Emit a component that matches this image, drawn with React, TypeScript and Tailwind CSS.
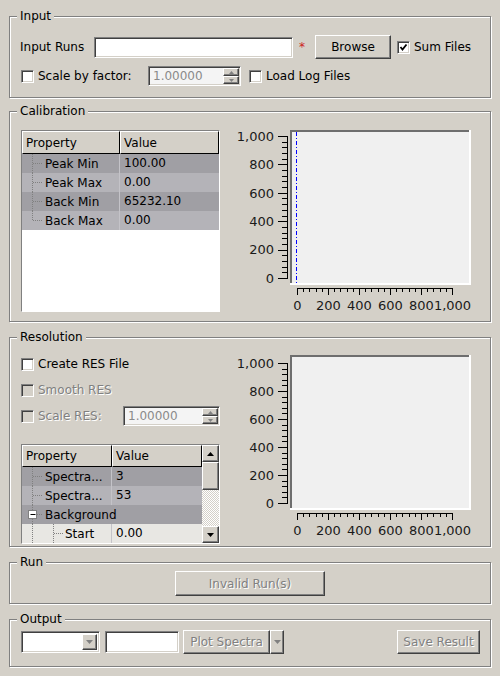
import React from 'react';

// Qt "Windows" style bevels
const sunken =
  'border border-t-[#808080] border-l-[#808080] border-b-white border-r-white shadow-[inset_1px_1px_0_#404040,inset_-1px_-1px_0_#d4d0c8]';
const raised =
  'border border-t-white border-l-white border-b-[#404040] border-r-[#404040] shadow-[inset_-1px_-1px_0_#808080]';
const greyText = 'text-[#808080] [text-shadow:1px_1px_0_#fff]';

const GroupBox: React.FC<{ title: string; className?: string; children: React.ReactNode }> = ({
  title,
  className = '',
  children,
}) => (
  <fieldset
    className={`ml-[9px] w-[482px] border border-[#808080] shadow-[1px_1px_0_#fff,inset_1px_1px_0_#fff] ${className}`}
  >
    <legend className="ml-[7px] px-[3px] leading-[14px] bg-[#d4d0c8]">{title}</legend>
    {children}
  </fieldset>
);

const CheckBox: React.FC<{ checked?: boolean; disabled?: boolean }> = ({ checked, disabled }) => (
  <span className={`block w-[13px] h-[13px] shrink-0 ${sunken} ${disabled ? 'bg-[#d4d0c8]' : 'bg-white'}`}>
    {checked && (
      <svg width="11" height="11" viewBox="0 0 11 11" className="block">
        <path d="M2.5 5 L4.5 7.5 L8.5 2.5" stroke="#000" strokeWidth="1.8" fill="none" />
      </svg>
    )}
  </span>
);

const Arrow: React.FC<{ up?: boolean; color?: string; size?: number }> = ({ up, color = '#000', size = 7 }) => {
  const h = Math.ceil(size / 2);
  return (
    <svg width={size} height={h} viewBox={`0 0 ${size} ${h}`} className="block">
      <path d={up ? `M0 ${h} L${size / 2} 0 L${size} ${h} Z` : `M0 0 L${size} 0 L${size / 2} ${h} Z`} fill={color} />
    </svg>
  );
};

const SpinBox: React.FC<{ className: string }> = ({ className }) => (
  <div className={`flex h-[20px] bg-[#f4f4f4] ${sunken} ${className}`}>
    <span className="flex-1 pl-[4px] leading-[18px] text-[#8a8a8a]">1.00000</span>
    <div className="flex flex-col w-[16px] my-[1px] mr-[1px]">
      <div className={`flex-1 flex items-center justify-center bg-[#d4d0c8] ${raised}`}>
        <Arrow up color="#808080" size={5} />
      </div>
      <div className={`flex-1 flex items-center justify-center bg-[#d4d0c8] ${raised}`}>
        <Arrow color="#808080" size={5} />
      </div>
    </div>
  </div>
);

const Plot: React.FC<{ yTop: number; marker?: boolean; className?: string }> = ({ yTop, marker, className = '' }) => {
  const yBot = 148;
  const yStep = (yBot - yTop) / 5;
  const x0 = 75;
  const xStep = 31;
  const labels = ['0', '200', '400', '600', '800', '1,000'];
  const yTicks: React.ReactNode[] = [];
  const xTicks: React.ReactNode[] = [];
  for (let i = 0; i <= 25; i++) {
    const major = i % 5 === 0;
    const y = Math.round(yBot - (i * yStep) / 5) + 0.5;
    yTicks.push(<line key={`y${i}`} x1={major ? 56 : 60} x2={66} y1={y} y2={y} stroke="#000" />);
    const x = Math.round(x0 + (i * xStep) / 5) + 0.5;
    xTicks.push(<line key={`x${i}`} x1={x} x2={x} y1={158} y2={major ? 165 : 162} stroke="#000" />);
  }
  return (
    <svg width="258" height="185" className={`block shrink-0 ${className}`} fontFamily="DejaVu Sans" fontSize="13">
      <rect x="68" y="0" width="181" height="155" fill="#fff" />
      <rect x="68" y="0" width="179" height="153" fill="#6e6e6e" />
      <rect x="70" y="2" width="177" height="151" fill="#f0f0f0" />
      {marker && <line x1="74.5" x2="74.5" y1="2" y2="153" stroke="#0000ff" strokeDasharray="4 2 1 2" />}
      <line x1="65.5" x2="65.5" y1={Math.round(yTop)} y2={yBot + 1} stroke="#000" />
      {yTicks}
      <line x1={x0} x2={x0 + 5 * xStep + 1} y1="158.5" y2="158.5" stroke="#000" />
      {xTicks}
      {labels.map((l, i) => (
        <text key={`yl${l}`} x="52" y={yBot - i * yStep + 4.7} textAnchor="end" fill="#1a1a1a">
          {l}
        </text>
      ))}
      {labels.map((l, i) => (
        <text key={`xl${l}`} x={x0 + 0.5 + i * xStep} y="180" textAnchor="middle" fill="#1a1a1a">
          {l}
        </text>
      ))}
    </svg>
  );
};

// dotted tree connectors
const Tree: React.FC<{ w: number; lines: number[]; branch: number; last?: boolean; box?: boolean }> = ({
  w,
  lines,
  branch,
  last,
  box,
}) => (
  <svg width={w} height="19" className="block shrink-0">
    {lines.map((x) =>
      box && x === branch ? (
        <g key={x}>
          <line x1={x + 0.5} x2={x + 0.5} y1="0" y2="5" stroke="#808080" strokeDasharray="1 1" />
          <line x1={x + 0.5} x2={x + 0.5} y1="14" y2="19" stroke="#808080" strokeDasharray="1 1" />
        </g>
      ) : (
        <line
          key={x}
          x1={x + 0.5}
          x2={x + 0.5}
          y1="0"
          y2={x === branch && last ? 10 : 19}
          stroke="#808080"
          strokeDasharray="1 1"
        />
      ),
    )}
    <line x1={branch + (box ? 5 : 1)} x2={branch + 11} y1="9.5" y2="9.5" stroke="#808080" strokeDasharray="1 1" />
    {box && (
      <>
        <rect x={branch - 3.5} y="5.5" width="8" height="8" fill="#fff" stroke="#808080" />
        <line x1={branch - 1.5} x2={branch + 3.5} y1="9.5" y2="9.5" stroke="#000" />
      </>
    )}
  </svg>
);

const Header: React.FC<{ nameW: string; valueW: string; h: string }> = ({ nameW, valueW, h }) => (
  <div className={`flex ${h} shrink-0`}>
    <div className={`${nameW} flex items-center pl-[3px] bg-[#d4d0c8] border border-t-white border-l-white border-b-black border-r-black`}>
      Property
    </div>
    <div className={`${valueW} flex items-center pl-[3px] bg-[#d4d0c8] border border-t-white border-l-white border-b-black border-r-black`}>
      Value
    </div>
  </div>
);

const calibRows = [
  { name: 'Peak Min', value: '100.00', dark: true },
  { name: 'Peak Max', value: '0.00', dark: false },
  { name: 'Back Min', value: '65232.10', dark: true },
  { name: 'Back Max', value: '0.00', dark: false, last: true },
];

export default function App() {
  return (
    <div className="w-[500px] h-[676px] bg-[#d4d0c8] text-[12px] text-black font-['DejaVu_Sans',sans-serif] pt-[9px] overflow-hidden">
      {/* Input */}
      <GroupBox title="Input">
        <div className="pt-[12px] pb-[11px] pl-[10px]">
          <div className="flex items-center h-[24px]">
            <span className="w-[74px]">Input Runs</span>
            <div className={`w-[199px] h-[21px] bg-white ${sunken}`} />
            <span className="w-[22px] pl-[6px] text-[#cc2222]">*</span>
            <button className={`w-[76px] h-[24px] bg-[#d4d0c8] ${raised}`}>Browse</button>
            <span className="ml-[6px] mr-[4px]">
              <CheckBox checked />
            </span>
            <span>Sum Files</span>
          </div>
          <div className="flex items-center h-[20px] mt-[7px]">
            <div className="w-[128px] flex items-center pl-[1px]">
              <CheckBox />
              <span className="ml-[4px]">Scale by factor:</span>
            </div>
            <SpinBox className="w-[93px]" />
            <span className="ml-[8px] mr-[4px]">
              <CheckBox />
            </span>
            <span>Load Log Files</span>
          </div>
        </div>
      </GroupBox>

      {/* Calibration */}
      <GroupBox title="Calibration" className="mt-[6px]">
        <div className="flex items-start pt-[12px] pb-[6px] pl-[11px]">
          <div className={`w-[199px] h-[182px] bg-white flex flex-col ${sunken} shadow-none`}>
            <Header nameW="w-[98px]" valueW="flex-1" h="h-[23px]" />
            {calibRows.map((r) => (
              <div key={r.name} className={`flex h-[19px] ${r.dark ? 'bg-[#a09fa4]' : 'bg-[#b4b3b8]'}`}>
                <div className="w-[98px] flex items-center border-r border-[#c4c3c8]">
                  <Tree w={23} lines={[10]} branch={10} last={r.last} />
                  <span>{r.name}</span>
                </div>
                <span className="flex-1 pl-[4px] leading-[19px]">{r.value}</span>
              </div>
            ))}
          </div>
          <Plot yTop={6} marker className="ml-[2px]" />
        </div>
      </GroupBox>

      {/* Resolution */}
      <GroupBox title="Resolution" className="mt-[8px]">
        <div className="flex items-start pt-[10px] pb-[2px] pl-[11px]">
          <div className="w-[199px] flex flex-col">
            <div className="flex items-center h-[20px]">
              <CheckBox />
              <span className="ml-[4px]">Create RES File</span>
            </div>
            <div className="flex items-center h-[20px] mt-[6px]">
              <CheckBox disabled />
              <span className={`ml-[4px] ${greyText}`}>Smooth RES</span>
            </div>
            <div className="flex items-center h-[20px] mt-[6px]">
              <div className="w-[102px] flex items-center">
                <CheckBox disabled />
                <span className={`ml-[4px] ${greyText}`}>Scale RES:</span>
              </div>
              <SpinBox className="w-[97px]" />
            </div>
            <div className={`mt-[18px] h-[100px] bg-white flex ${sunken} shadow-none`}>
              <div className="w-[180px] flex flex-col">
                <Header nameW="w-[90px]" valueW="w-[90px]" h="h-[22px]" />
                <div className="flex h-[19px] bg-[#a09fa4]">
                  <div className="w-[90px] flex items-center border-r border-[#c4c3c8]">
                    <Tree w={23} lines={[10]} branch={10} />
                    <span>Spectra...</span>
                  </div>
                  <span className="flex-1 pl-[4px] leading-[19px]">3</span>
                </div>
                <div className="flex h-[19px] bg-[#b4b3b8]">
                  <div className="w-[90px] flex items-center border-r border-[#c4c3c8]">
                    <Tree w={23} lines={[10]} branch={10} />
                    <span>Spectra...</span>
                  </div>
                  <span className="flex-1 pl-[4px] leading-[19px]">53</span>
                </div>
                <div className="flex items-center h-[19px] bg-[#a09fa4]">
                  <Tree w={23} lines={[10]} branch={10} box />
                  <span>Background</span>
                </div>
                <div className="flex h-[19px] bg-[#e8e7e3]">
                  <div className="w-[90px] flex items-center border-r border-[#c4c3c8]">
                    <Tree w={43} lines={[10, 31]} branch={31} />
                    <span>Start</span>
                  </div>
                  <span className="flex-1 pl-[4px] leading-[19px]">0.00</span>
                </div>
              </div>
              {/* scrollbar */}
              <div className="w-[17px] flex flex-col">
                <div className={`h-[17px] flex items-center justify-center bg-[#d4d0c8] ${raised}`}>
                  <Arrow up />
                </div>
                <div className={`h-[28px] bg-[#d4d0c8] ${raised}`} />
                <div className="flex-1 bg-[repeating-conic-gradient(#ffffff_0%_25%,#d4d0c8_0%_50%)] bg-[length:2px_2px]" />
                <div className={`h-[17px] flex items-center justify-center bg-[#d4d0c8] ${raised}`}>
                  <Arrow />
                </div>
              </div>
            </div>
          </div>
          <Plot yTop={8} className="ml-[2px] mt-[1px]" />
        </div>
      </GroupBox>

      {/* Run */}
      <GroupBox title="Run" className="mt-[8px]">
        <div className="pt-[2px] pb-[7px] pl-[165px]">
          <button className={`w-[150px] h-[25px] bg-[#d4d0c8] ${raised} ${greyText}`}>Invalid Run(s)</button>
        </div>
      </GroupBox>

      {/* Output */}
      <GroupBox title="Output" className="mt-[8px]">
        <div className="flex items-center h-[24px] mt-[4px] mb-[12px] pl-[11px] pr-[10px]">
          <div className={`w-[79px] h-[22px] bg-white flex justify-end p-[2px] ${sunken}`}>
            <div className={`w-[15px] h-full flex items-center justify-center bg-[#d4d0c8] ${raised}`}>
              <Arrow color="#808080" />
            </div>
          </div>
          <div className={`ml-[5px] w-[74px] h-[22px] bg-white ${sunken}`} />
          <button className={`ml-[4px] w-[87px] h-[24px] bg-[#d4d0c8] ${raised} ${greyText}`}>Plot Spectra</button>
          <div className={`w-[14px] h-[24px] flex items-center justify-center bg-[#d4d0c8] ${raised}`}>
            <Arrow color="#808080" />
          </div>
          <button className={`ml-auto w-[83px] h-[24px] bg-[#d4d0c8] ${raised} ${greyText}`}>Save Result</button>
        </div>
      </GroupBox>
    </div>
  );
}
